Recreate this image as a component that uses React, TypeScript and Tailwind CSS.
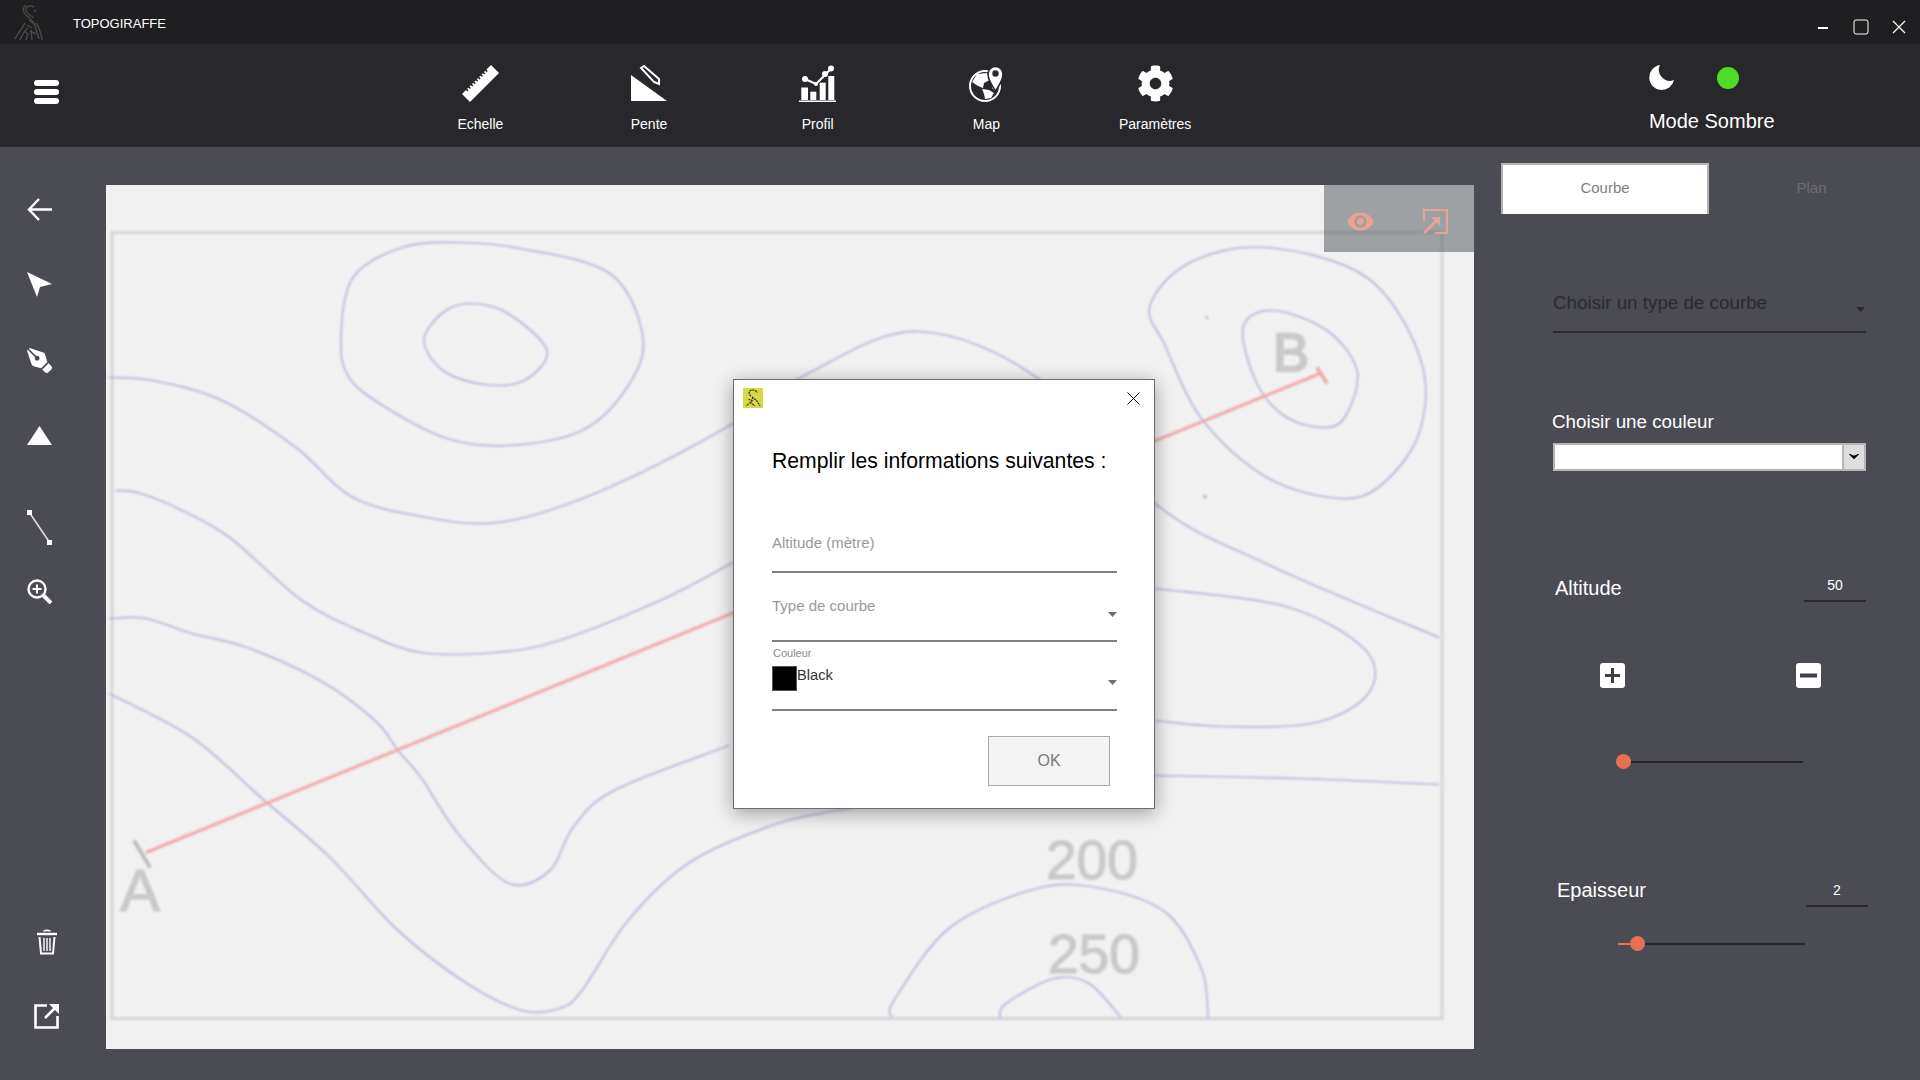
// Topogiraffe main window with the "new curve" dialog on top
import { MdVisibility } from 'react-icons/md';
import { FaCog, FaPenNib } from 'react-icons/fa';

type Pt = [number, number];

// Catmull-Rom through hand-picked points, good enough for contour lines
const smooth = (pts: Pt[], closed = false) => {
  const at = (i: number) =>
    closed ? pts[(i + pts.length) % pts.length] : pts[Math.max(0, Math.min(pts.length - 1, i))];
  const count = closed ? pts.length : pts.length - 1;
  let d = `M${pts[0][0]} ${pts[0][1]}`;
  for (let i = 0; i < count; i++) {
    const [p0, p1, p2, p3] = [at(i - 1), at(i), at(i + 1), at(i + 2)];
    const c1 = [p1[0] + (p2[0] - p0[0]) / 6, p1[1] + (p2[1] - p0[1]) / 6];
    const c2 = [p2[0] - (p3[0] - p1[0]) / 6, p2[1] - (p3[1] - p1[1]) / 6];
    d += ` C${c1[0]} ${c1[1]} ${c2[0]} ${c2[1]} ${p2[0]} ${p2[1]}`;
  }
  return d;
};

const openCurves: Pt[][] = [
  [[108, 377], [153, 380], [222, 400], [296, 447], [353, 497], [427, 517], [488, 523], [549, 510], [631, 477], [733, 423], [808, 373], [918, 331], [1041, 380], [1155, 503], [1270, 565], [1439, 637]],
  [[116, 490], [141, 493], [182, 510], [231, 538], [302, 600], [366, 633], [421, 652], [495, 652], [559, 640], [660, 600], [733, 562]],
  [[1155, 588], [1286, 606], [1365, 649], [1369, 692], [1316, 722], [1224, 726], [1155, 720]],
  [[109, 618], [146, 618], [192, 633], [247, 647], [320, 680], [375, 720], [398, 750], [421, 777], [458, 833], [509, 883], [550, 870], [573, 827], [614, 790], [729, 745]],
  [[109, 693], [192, 737], [261, 797], [330, 857], [398, 930], [467, 983], [522, 1010], [559, 1008], [582, 990], [628, 920], [688, 863], [766, 827], [820, 813], [900, 800]],
  [[1155, 775], [1300, 778], [1439, 784]],
  [[892, 1017], [894, 1000], [950, 927], [1037, 888], [1102, 888], [1167, 913], [1202, 970], [1208, 1017]],
  [[1000, 1017], [1006, 1003], [1054, 978], [1089, 983], [1121, 1017]],
];

const loops: Pt[][] = [
  [[459, 242], [520, 248], [610, 273], [643, 337], [627, 387], [582, 430], [508, 445], [447, 438], [386, 407], [349, 377], [341, 337], [353, 277], [402, 247]],
  [[471, 303], [508, 313], [547, 350], [524, 380], [484, 384], [443, 370], [424, 340], [443, 312]],
  [[1150, 305], [1190, 262], [1267, 247], [1367, 277], [1420, 357], [1420, 430], [1383, 483], [1340, 498], [1267, 477], [1203, 420], [1165, 345]],
  [[1243, 327], [1273, 310], [1327, 330], [1357, 370], [1347, 413], [1327, 427], [1287, 417], [1257, 383]],
];

const TopoMap = () => (
  <svg viewBox="106 185 1368 863" className="block w-full h-full blur-[0.8px]">
    <path d="M112 232H1442V1018H112Z" fill="none" stroke="#d6d6d6" strokeWidth="3" />
    {openCurves.map((c, i) => (
      <path key={i} d={smooth(c)} fill="none" stroke="#b4b6dc" strokeWidth="1.7" />
    ))}
    {loops.map((c, i) => (
      <path key={i} d={smooth(c, true)} fill="none" stroke="#b4b6dc" strokeWidth="1.7" />
    ))}
    <path d="M146 852L1320 373" stroke="#efaaa8" strokeWidth="3" />
    <path d="M1317 367L1327 383" stroke="#efaaa8" strokeWidth="4" />
    <path d="M134 840L150 867" stroke="#bdbdbd" strokeWidth="4" />
    <circle cx="1207" cy="317" r="1.5" fill="#b8bade" />
    <circle cx="1205" cy="496" r="2" fill="#c0c0c0" />
    <g fill="#c9c9c9" stroke="#c9c9c9" strokeWidth="1.2" fontFamily="'Liberation Sans', sans-serif">
      <text x="120" y="910" fontSize="60">A</text>
      <text x="1273" y="370" fontSize="54" strokeWidth="2.4">B</text>
      <text x="1046" y="878" fontSize="55">200</text>
      <text x="1048" y="972" fontSize="55">250</text>
    </g>
  </svg>
);

const GiraffeLogo = () => (
  <svg width="34" height="38" viewBox="0 0 34 38" fill="none" stroke="#4a4a4a" strokeWidth="1.4">
    <path d="M12 2C8 5 9 10 13 13C17 16 20 19 21 23L25 36M20 4C16 2 12 3 12 7C12 10 16 12 20 15M22 7L20 9" />
    <path d="M1 36C4 30 8 26 11 20M6 37C8 32 10 28 14 25M12 37L14 30M18 37L17 27M28 37C27 30 25 24 22 20" />
    <path d="M15 17L20 21M13 22L18 25M16 28L22 31M10 28L14 31" />
  </svg>
);

const tools = [
  {
    label: 'Echelle',
    icon: (
      <svg width="37" height="37" viewBox="0 0 37 37">
        <path d="M0 29L29 0L37 8L8 37Z" fill="white" />
        <path d="M4 25L25 4" stroke="#28282c" strokeWidth="4" strokeDasharray="1.6 1.8" />
      </svg>
    ),
  },
  {
    label: 'Pente',
    icon: (
      <svg width="37" height="37" viewBox="0 0 37 37">
        <path d="M0 10L36 36H0Z" fill="white" />
        <path d="M10 3L13 1L28 14L28 19L23 17Z" fill="none" stroke="white" strokeWidth="2" />
      </svg>
    ),
  },
  {
    label: 'Profil',
    icon: (
      <svg width="37" height="37" viewBox="0 0 37 37" fill="white">
        <rect x="2.3" y="22.5" width="6.7" height="12.5" />
        <rect x="11.3" y="26.7" width="6" height="8.3" />
        <rect x="20.7" y="17.7" width="6" height="17.3" />
        <rect x="29.3" y="11" width="6" height="24" />
        <rect x="0" y="35.5" width="37" height="1.5" />
        <path d="M6 14L17 19L26 10L32 3.5" fill="none" stroke="white" strokeWidth="2" />
        <circle cx="6" cy="14" r="3" />
        <circle cx="17" cy="19" r="2" />
        <circle cx="26" cy="9" r="3" />
        <circle cx="32" cy="3.5" r="3" />
      </svg>
    ),
  },
  {
    label: 'Map',
    icon: (
      <svg width="37" height="37" viewBox="0 0 37 37">
        <circle cx="17" cy="21" r="15" fill="none" stroke="white" strokeWidth="2" />
        <path d="M9 9L19 8L22 15L16 18L15 23L10 21L4 17ZM14 24L21 25L26 28L23 33L17 34L16 29ZM25 19L30 22L27 26L24 23Z" fill="white" />
        <path d="M27.5 26C23 19 20 15 20 9A7.5 7.5 0 0 1 35 9C35 15 32 19 27.5 26Z" fill="white" stroke="#28282c" strokeWidth="1.5" />
        <circle cx="27.5" cy="8.5" r="3.2" fill="#28282c" />
      </svg>
    ),
  },
  { label: 'Paramètres', icon: <FaCog size={37} color="white" /> },
];

const Caret = ({ color = '#6f6f6f' }: { color?: string }) => (
  <svg width="9" height="5" viewBox="0 0 9 5">
    <path d="M0 0H9L4.5 5Z" fill={color} />
  </svg>
);

const Slider = ({ filled }: { filled: number }) => (
  <div className="flex items-center h-[15px]">
    {filled > 0 && <div className="h-[2px] bg-[#e8704f]" style={{ width: filled }} />}
    <div className="w-[15px] h-[15px] rounded-full bg-[#e8704f] shrink-0" />
    <div className="h-[2px] flex-1 bg-[#28282c]" />
  </div>
);

export default function App() {
  return (
    <div className="relative w-[1920px] h-[1080px] overflow-hidden flex flex-col bg-[#4b4b53] font-['Liberation_Sans',Arial,sans-serif]">
      {/* Title bar */}
      <div className="h-11 shrink-0 bg-[#1f1f21] flex items-center">
        <div className="ml-[14px] w-[34px]">
          <GiraffeLogo />
        </div>
        <span className="ml-[25px] pt-1 text-[13px] text-white">TOPOGIRAFFE</span>
        <div className="ml-auto mr-[14px] flex items-center gap-[23px] pt-[10px]">
          <svg width="14" height="14" viewBox="0 0 14 14">
            <path d="M2 8H12" stroke="white" strokeWidth="2" />
          </svg>
          <svg width="16" height="16" viewBox="0 0 16 16">
            <rect x="1" y="1" width="14" height="14" rx="2" fill="none" stroke="white" strokeWidth="1" />
          </svg>
          <svg width="14" height="14" viewBox="0 0 14 14">
            <path d="M1 1L13 13M13 1L1 13" stroke="white" strokeWidth="1.2" />
          </svg>
        </div>
      </div>

      {/* Toolbar */}
      <div className="h-[103px] shrink-0 bg-[#28282c] flex">
        <div className="w-[396px] pl-[34px] pt-9 shrink-0">
          <div className="w-[25px] flex flex-col gap-[3px]">
            <div className="h-[6px] rounded-full bg-white" />
            <div className="h-[6px] rounded-full bg-white" />
            <div className="h-[6px] rounded-full bg-white" />
          </div>
        </div>
        {tools.map((tool) => (
          <div key={tool.label} className="w-[168.7px] flex flex-col items-center pt-[21px]">
            <div className="h-[37px]">{tool.icon}</div>
            <span className="mt-[12px] text-[14px] leading-[20px] text-white">{tool.label}</span>
          </div>
        ))}
        <div className="ml-[409.5px] pt-[21px]">
          <div className="flex items-center h-[25px]">
            <svg width="25" height="25" viewBox="0 0 25 25">
              <path d="M11 0A12.5 12.5 0 1 0 25 15A11 11 0 0 1 11 0Z" fill="white" />
            </svg>
            <div className="ml-[43px] w-[22px] h-[22px] rounded-full bg-[#4fdc24]" />
          </div>
          <div className="mt-[19px] text-[20px] leading-[24px] text-white whitespace-nowrap">Mode Sombre</div>
        </div>
      </div>

      {/* Body */}
      <div className="flex-1 flex min-h-0">
        <div className="w-[106px] shrink-0 flex flex-col pl-[27px] pt-[50px] pb-[51px]">
          <svg width="25" height="25" viewBox="0 0 25 25" fill="none" stroke="white" strokeWidth="2.4">
            <path d="M25 12.5H2M12 2L2 12.5L12 23" />
          </svg>
          <svg className="mt-[50px]" width="25" height="25" viewBox="0 0 25 25">
            <path d="M0 0L25 12L13 15L10 25Z" fill="white" />
          </svg>
          <FaPenNib className="mt-[51px] rotate-90" size={25} color="white" />
          <svg className="mt-[50px]" width="25" height="25" viewBox="0 0 25 25">
            <path d="M12.5 3L25 22H0Z" fill="white" />
          </svg>
          <svg className="mt-[62px]" width="25" height="35" viewBox="0 0 25 35">
            <path d="M2 2L23 33" stroke="#e2e2e2" strokeWidth="1.5" />
            <rect x="0" y="0" width="5" height="5" fill="white" />
            <rect x="20" y="30" width="5" height="5" fill="white" />
          </svg>
          <svg className="mt-[34px]" width="25" height="25" viewBox="0 0 25 25" fill="none" stroke="white">
            <circle cx="10" cy="10" r="8.5" strokeWidth="2.4" />
            <path d="M16.5 16.5L24 24" strokeWidth="4" />
            <path d="M10 5.5V14.5M5.5 10H14.5" strokeWidth="2" />
          </svg>
          <svg className="mt-auto ml-[10px]" width="20" height="26" viewBox="0 0 20 26" fill="none" stroke="white">
            <path d="M0 5H20" strokeWidth="2.4" />
            <path d="M7 2.5C7 1 13 1 13 2.5" strokeWidth="1.6" />
            <path d="M2.5 8L4 24.5H16L17.5 8" strokeWidth="2" />
            <path d="M7 9V22M10 9V22M13 9V22" strokeWidth="1.4" />
          </svg>
          <svg className="mt-[49px] ml-[7px]" width="25" height="25" viewBox="0 0 25 25" fill="none" stroke="white" strokeWidth="2.6">
            <path d="M13 1.5H1.5V23.5H23.5V12" />
            <path d="M11 14L21 4" />
            <path d="M15 0H25V10Z" fill="white" stroke="none" />
          </svg>
        </div>

        <div className="relative mt-[38px] w-[1368px] h-[864px] shrink-0 bg-[#f1f1f1]">
          <TopoMap />
          <div className="absolute right-0 top-0 w-[150px] h-[67px] bg-[#4b5257]/50 flex items-center pl-[22px] pt-[6px] gap-[48px]">
            <MdVisibility size={29} color="#e8a393" />
            <svg width="25" height="25" viewBox="0 0 25 25" fill="none" stroke="#e8a393" strokeWidth="2">
              <path d="M1 12V1H24V24H12" />
              <path d="M1 24L15 10" strokeWidth="2.6" />
              <path d="M8 8H17V17Z" fill="#e8a393" stroke="none" />
            </svg>
          </div>
        </div>

        {/* Right panel */}
        <div className="flex-1 pt-4 text-white">
          <div className="ml-[27px] flex h-[51px]">
            <div className="w-[208px] bg-white border-x-2 border-t-2 border-[#b5b5b5] flex items-center justify-center pb-[2px] text-[15px] text-[#7e7e7e]">
              Courbe
            </div>
            <div className="w-[205px] flex items-center justify-center text-[15px] text-[#6e6e6e]">Plan</div>
          </div>

          <div className="ml-[79px] w-[313px] mt-[61px] h-[58px] border-b-2 border-[#2b2b2e] flex justify-between pt-4">
            <span className="text-[18.8px] leading-6 text-[#2b2b2e]">Choisir un type de courbe</span>
            <div className="pt-[16px] pr-[1px]">
              <Caret color="#2b2b2e" />
            </div>
          </div>

          <div className="ml-[78px] mt-[77px] text-[18.8px] leading-6">Choisir une couleur</div>
          <div className="ml-[79px] w-[313px] mt-[9px] h-[28px] border-2 border-[#b5b5b5] bg-white flex justify-end">
            <div className="w-[22px] bg-[#dedede] border-l-2 border-[#b5b5b5] flex items-center justify-center">
              <svg width="10" height="6" viewBox="0 0 10 6">
                <path d="M0 0L5 5L10 0L5 2Z" fill="black" stroke="black" strokeWidth="0.6" />
              </svg>
            </div>
          </div>

          <div className="ml-[81px] w-[311px] mt-[102px] flex justify-between">
            <span className="text-[20px] leading-[30px]">Altitude</span>
            <div className="w-[62px] h-[29px] border-b-2 border-[#2b2b2e] text-center text-[14px] leading-[24px]">50</div>
          </div>

          <div className="ml-[126px] mt-[60px] flex gap-[171px]">
            <svg width="25" height="25" viewBox="0 0 25 25">
              <rect width="25" height="25" rx="3" fill="white" />
              <path d="M12.5 5V20M5 12.5H20" stroke="#3f3f47" strokeWidth="3" />
            </svg>
            <svg width="25" height="25" viewBox="0 0 25 25">
              <rect width="25" height="25" rx="3" fill="white" />
              <path d="M4 12.5H21" stroke="#3f3f47" strokeWidth="4" />
            </svg>
          </div>

          <div className="ml-[142px] w-[187px] mt-[66px]">
            <Slider filled={0} />
          </div>

          <div className="ml-[83px] w-[311px] mt-[106px] flex justify-between">
            <span className="text-[20px] leading-[30px]">Epaisseur</span>
            <div className="mt-[3px] w-[62px] h-[29px] border-b-2 border-[#2b2b2e] text-center text-[14px] leading-[24px]">2</div>
          </div>

          <div className="ml-[144px] w-[187px] mt-[29px]">
            <Slider filled={12} />
          </div>
        </div>
      </div>

      {/* Dialog over the map */}
      <div className="absolute left-[733px] top-[379px] w-[422px] h-[430px] bg-white border border-[#6e6e6e] shadow-[0_4px_18px_rgba(0,0,0,0.35)]">
        <div className="flex justify-between pl-[9px] pt-2 pr-[14px]">
          <svg width="20" height="20" viewBox="0 0 20 20" fill="none">
            <rect width="20" height="20" fill="#d6d93f" />
            <path d="M8 8C5 6 6 2 9 2C12 2 14 3 14 5M9 9L14 13L17 18M10 9L8 14L3 18M7 14L12 18M10 13L5 11" stroke="#26263a" strokeWidth="1.2" strokeDasharray="2 0.8" />
          </svg>
          <svg className="mt-[4px]" width="13" height="13" viewBox="0 0 13 13">
            <path d="M0.5 0.5L12.5 12.5M12.5 0.5L0.5 12.5" stroke="black" strokeWidth="1" />
          </svg>
        </div>

        <div className="ml-[38px] mt-[38px] text-[21.2px] leading-[30px] text-black whitespace-nowrap">
          Remplir les informations suivantes :
        </div>

        <div className="ml-[38px] w-[345px]">
          <div className="mt-[54px] h-[43px] border-b-2 border-[#808080] pt-[3px] text-[15px] leading-5 text-[#999999]">
            Altitude (mètre)
          </div>
          <div className="h-[69px] border-b-2 border-[#808080] pt-[23px] flex justify-between text-[15px] leading-5 text-[#999999]">
            <span>Type de courbe</span>
            <div className="pt-[16px]">
              <Caret />
            </div>
          </div>
          <div className="h-[69px] border-b-2 border-[#808080] pt-[5px]">
            <div className="text-[11px] leading-[13px] text-[#8a8a8a] pl-[1px]">Couleur</div>
            <div className="mt-[6px] flex">
              <div className="w-[25px] h-[25px] bg-black border border-[#555555]" />
              <span className="text-[14.67px] leading-[18px] text-[#333333]">Black</span>
              <div className="ml-auto pt-[14px]">
                <Caret />
              </div>
            </div>
          </div>
          <div className="ml-[216px] mt-[25px] w-[122px] h-[50px] bg-[#f3f3f3] border border-[#aaaaaa] flex items-center justify-center text-[16px] text-[#777777]">
            OK
          </div>
        </div>
      </div>
    </div>
  );
}
